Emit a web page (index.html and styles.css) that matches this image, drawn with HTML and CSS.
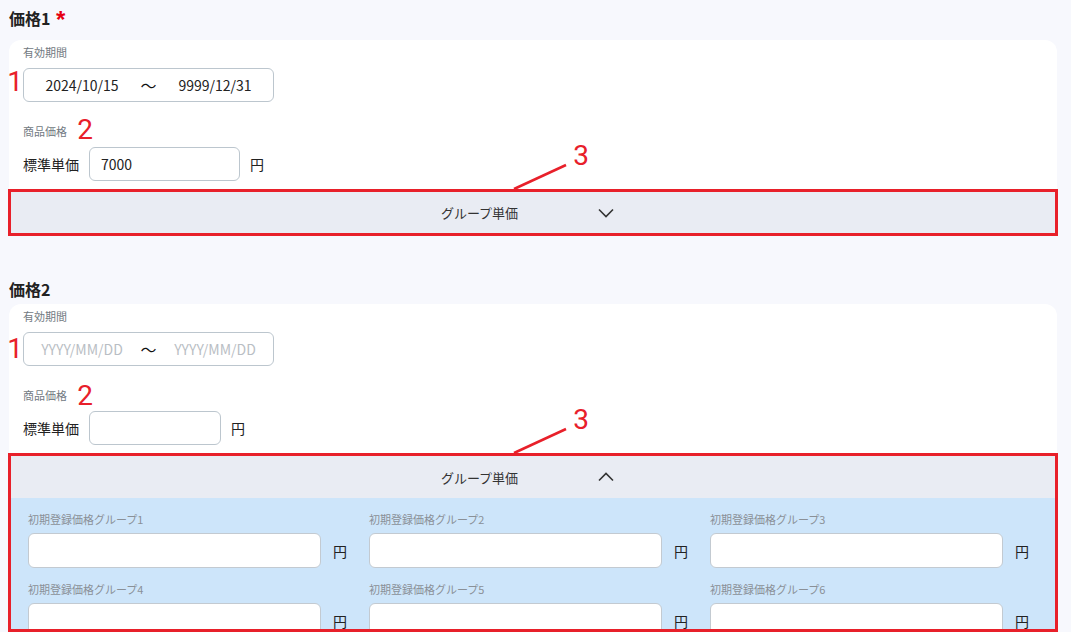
FILE: index.html
```html
<!DOCTYPE html>
<html lang="ja">
<head>
    <meta charset="UTF-8">
    <meta name="viewport" content="width=device-width, initial-scale=1.0">
    <title>価格設定</title>
    <link rel="stylesheet" href="styles.css">
</head>
<body>
    <!-- 価格1 -->
    <section class="price-section">
        <h2 class="section-title is-required">価格1 <span class="required-mark">*</span></h2>
        <div class="price-card">
            <div class="field-label">有効期間</div>
            <div class="date-range">
                <input class="date-input" type="text" value="2024/10/15" placeholder="YYYY/MM/DD">
                <span class="date-sep">〜</span>
                <input class="date-input" type="text" value="9999/12/31" placeholder="YYYY/MM/DD">
            </div>

            <div class="field-label field-label--spaced">商品価格</div>
            <div class="price-row">
                <span class="price-row-label">標準単価</span>
                <input class="price-input" type="text" value="7000">
                <span class="yen">円</span>
            </div>

            <div class="group-price">
                <button class="group-toggle" type="button">
                    <span>グループ単価</span>
                    <svg class="chevron" width="16" height="10" viewBox="0 0 16 10"><path d="M1 1.5l7 7 7-7" fill="none" stroke="#333" stroke-width="1.6"/></svg>
                </button>
            </div>

            <span class="annot annot-1">1</span>
            <span class="annot annot-2">2</span>
            <span class="annot annot-3">3</span>
            <svg class="annot-line" width="64" height="34" viewBox="0 0 64 34"><line x1="5" y1="29" x2="57" y2="5" stroke="#e8202a" stroke-width="2.5"/></svg>
        </div>
    </section>

    <!-- 価格2 -->
    <section class="price-section price-section--next">
        <h2 class="section-title">価格2</h2>
        <div class="price-card">
            <div class="field-label">有効期間</div>
            <div class="date-range">
                <input class="date-input" type="text" placeholder="YYYY/MM/DD">
                <span class="date-sep">〜</span>
                <input class="date-input" type="text" placeholder="YYYY/MM/DD">
            </div>

            <div class="field-label field-label--spaced">商品価格</div>
            <div class="price-row">
                <span class="price-row-label">標準単価</span>
                <input class="price-input price-input--narrow" type="text">
                <span class="yen">円</span>
            </div>

            <div class="group-price is-open">
                <button class="group-toggle" type="button">
                    <span>グループ単価</span>
                    <svg class="chevron" width="16" height="10" viewBox="0 0 16 10"><path d="M1 8.5l7-7 7 7" fill="none" stroke="#333" stroke-width="1.6"/></svg>
                </button>
                <div class="group-body">
                    <div class="group-grid">
                        <div class="group-cell">
                            <div class="group-label">初期登録価格グループ1</div>
                            <div class="group-input-row"><input class="group-input" type="text"><span class="yen">円</span></div>
                        </div>
                        <div class="group-cell">
                            <div class="group-label">初期登録価格グループ2</div>
                            <div class="group-input-row"><input class="group-input" type="text"><span class="yen">円</span></div>
                        </div>
                        <div class="group-cell">
                            <div class="group-label">初期登録価格グループ3</div>
                            <div class="group-input-row"><input class="group-input" type="text"><span class="yen">円</span></div>
                        </div>
                        <div class="group-cell">
                            <div class="group-label">初期登録価格グループ4</div>
                            <div class="group-input-row"><input class="group-input" type="text"><span class="yen">円</span></div>
                        </div>
                        <div class="group-cell">
                            <div class="group-label">初期登録価格グループ5</div>
                            <div class="group-input-row"><input class="group-input" type="text"><span class="yen">円</span></div>
                        </div>
                        <div class="group-cell">
                            <div class="group-label">初期登録価格グループ6</div>
                            <div class="group-input-row"><input class="group-input" type="text"><span class="yen">円</span></div>
                        </div>
                    </div>
                </div>
            </div>

            <span class="annot annot-1 annot-1--low">1</span>
            <span class="annot annot-2 annot-2--low">2</span>
            <span class="annot annot-3">3</span>
            <svg class="annot-line" width="64" height="34" viewBox="0 0 64 34"><line x1="5" y1="29" x2="57" y2="5" stroke="#e8202a" stroke-width="2.5"/></svg>
        </div>
    </section>
</body>
</html>
```

FILE: styles.css
```css
* {
    margin: 0;
    padding: 0;
    box-sizing: border-box;
}

body {
    font-family: "Noto Sans CJK JP", "Noto Sans", sans-serif;
    background: #f7f8fd;
    color: #222;
    padding: 6px 14px 0 9px;
    overflow: hidden;
}

input {
    font-family: inherit;
    color: #222;
    outline: none;
}

input::placeholder {
    color: #b9bec4;
}

.section-title {
    font-size: 16px;
    font-weight: 700;
    line-height: 24px;
    margin-bottom: 3px;
    color: #222;
}

.section-title.is-required {
    margin-bottom: 10px;
}

.required-mark {
    display: inline-block;
    margin-left: 2px;
    color: #e60012;
    font-family: "Liberation Sans", sans-serif;
    font-size: 24px;
    font-weight: 700;
    line-height: 27px;
    height: 24px;
    vertical-align: top;
}

.price-section--next {
    margin-top: 41px;
}

.price-card {
    position: relative;
    background: white;
    border-radius: 12px 12px 0 0;
    padding-top: 4px;
}

.field-label {
    font-size: 11px;
    line-height: 16px;
    color: #727a82;
    padding-left: 14px;
}

.field-label--spaced {
    margin-top: 21px;
}

.date-range {
    display: flex;
    align-items: center;
    width: 251px;
    height: 34px;
    margin: 8px 0 0 14px;
    border: 1px solid #bcc6ce;
    border-radius: 6px;
}

.date-input {
    flex: 1;
    min-width: 0;
    height: 100%;
    border: none;
    background: transparent;
    font-size: 14px;
    text-align: center;
}

.date-sep {
    width: 17px;
    font-size: 16px;
    text-align: center;
    color: #111;
}

.price-row {
    display: flex;
    align-items: center;
    gap: 10px;
    margin: 8px 0 0 14px;
}

.price-row-label {
    font-size: 14px;
    color: #222;
}

.price-input {
    width: 151px;
    height: 34px;
    padding: 0 11px;
    border: 1px solid #bcc6ce;
    border-radius: 6px;
    font-size: 14px;
}

.price-input--narrow {
    width: 132px;
}

.yen {
    font-size: 14px;
    color: #222;
}

/* グループ単価 */
.group-price {
    margin: 8px -1px 0;
    border: 3px solid #e8202a;
}

.group-toggle {
    width: 100%;
    height: 41px;
    display: flex;
    align-items: center;
    justify-content: center;
    gap: 80px;
    padding-right: 11px;
    border: none;
    background: #e9ecf3;
    font-family: inherit;
    font-size: 13px;
    color: #333;
    cursor: pointer;
}

.is-open .group-toggle {
    height: 42px;
}

.chevron {
    display: block;
}

.group-body {
    height: 131px;
    overflow: hidden;
    background: #cde5fa;
    padding: 13px 26px 0 17px;
}

.group-grid {
    display: grid;
    grid-template-columns: repeat(3, 1fr);
    column-gap: 22px;
    row-gap: 13px;
}

.group-label {
    font-size: 11px;
    line-height: 16px;
    color: #8a9097;
    margin-bottom: 6px;
}

.group-input-row {
    display: flex;
    align-items: center;
    gap: 12px;
}

.group-input {
    flex: 1;
    min-width: 0;
    height: 35px;
    border: 1px solid #c3cad1;
    border-radius: 6px;
    background: white;
    padding: 0 10px;
    font-size: 14px;
}

/* 注釈 */
.annot {
    position: absolute;
    width: 20px;
    text-align: center;
    font-family: Roboto, "Liberation Sans", sans-serif;
    font-size: 28px;
    line-height: 28px;
    color: #e8202a;
}

.annot-1 {
    left: -4px;
    top: 28px;
}

.annot-1--low {
    top: 31px;
}

.annot-2 {
    left: 66px;
    top: 76px;
}

.annot-2--low {
    top: 78px;
}

.annot-3 {
    left: 562px;
    top: 102px;
}

.annot-line {
    position: absolute;
    left: 500px;
    top: 120px;
}
```
